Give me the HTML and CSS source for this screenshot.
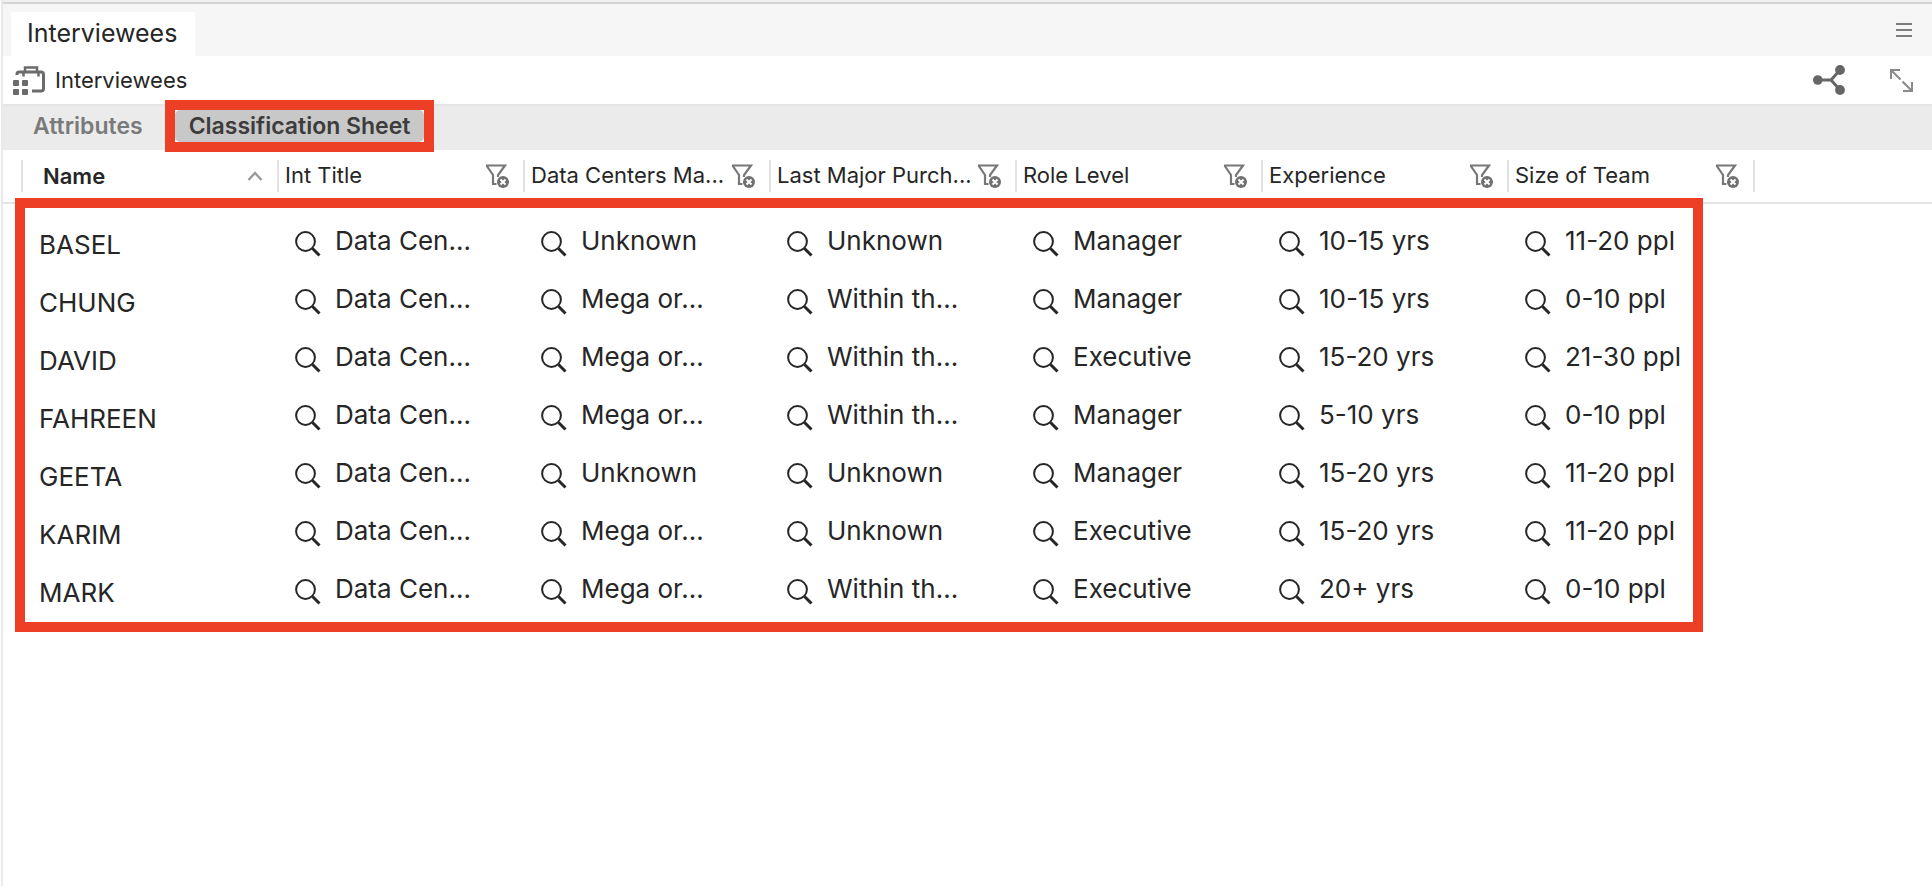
FILE: index.html
```
<!DOCTYPE html>
<html lang="en">
<head>
<meta charset="utf-8">
<title>Interviewees</title>
<link rel="stylesheet" href="styles.css">
</head>
<body>
<svg class="sprite" aria-hidden="true">
  <symbol id="filter" viewBox="0 0 24 24">
    <path d="M1 1.500H20L13 11V13M1.500 1.500L8 11V20H11.500" fill="none" stroke="#777" stroke-width="2.200"/>
    <circle cx="18" cy="18" r="6" fill="#707070"/>
    <path d="M15.500 15.500l5 5M20.500 15.500l-5 5" stroke="#fff" stroke-width="2"/>
  </symbol>
  <symbol id="search" viewBox="0 0 26 26">
    <circle cx="10.500" cy="10.500" r="9.400" fill="none" stroke="#262626" stroke-width="2"/>
    <path d="M17.500 17.500L24.500 24.500" stroke="#262626" stroke-width="3"/>
  </symbol>
</svg>
<div class="window">
  <header class="titlebar">
    <button class="doc-tab" type="button">Interviewees</button>
    <button class="icon-btn menu" type="button" aria-label="Menu">
      <svg width="16" height="14" viewBox="0 0 16 14"><path d="M0 1H16M0 7H16M0 13H16" stroke="#7c7c7c" stroke-width="2"/></svg>
    </button>
  </header>
  <div class="toolbar">
    <svg class="case" width="32" height="29" viewBox="0 0 32 29" aria-hidden="true">
      <g fill="none" stroke="#6b6b6b">
        <path d="M4 9V8Q4 6 6 6H28Q30.500 6 30.500 8.500V22.500Q30.500 25 28 25H19" stroke-width="3"/>
        <path d="M12 6V1.500H24V6" stroke-width="2.500"/>
        <path d="M10.500 6V10.500M25.500 6V10.500" stroke-width="2.500"/>
      </g>
      <g fill="#6b6b6b"><rect y="14" width="6" height="6" rx="1"/><rect x="9" y="14" width="6" height="6" rx="1"/><rect y="23" width="6" height="6" rx="1"/><rect x="9" y="23" width="6" height="6" rx="1"/></g>
    </svg>
    <h1 class="title">Interviewees</h1>
    <button class="icon-btn" type="button" aria-label="Share">
      <svg width="32" height="30" viewBox="0 0 32 30"><path d="M5 15H18L27 5M18 15L27 25" fill="none" stroke="#666" stroke-width="3"/><g fill="#666"><circle cx="4.800" cy="15" r="4.800"/><circle cx="27" cy="5" r="4.900"/><circle cx="27" cy="25" r="4.900"/></g></svg>
    </button>
    <button class="icon-btn" type="button" aria-label="Expand">
      <svg width="23" height="23" viewBox="0 0 23 23" fill="none" stroke="#8a8a8a" stroke-width="2"><path d="M1 10V1H10M1 1L10.500 10.500M22 13V22H13M22 22L12.500 12.500"/></svg>
    </button>
  </div>
  <nav class="views">
    <button class="view plain" type="button">Attributes</button>
    <span class="marked"><button class="view active" type="button">Classification Sheet</button></span>
  </nav>
  <main class="sheet">
    <table class="grid">
      <colgroup><col class="c-edge"><col class="c-name"><col class="c-attr"><col class="c-attr"><col class="c-attr"><col class="c-attr"><col class="c-attr"><col class="c-attr"><col></colgroup>
      <thead>
        <tr>
          <td></td>
          <th scope="col"><div class="head name-head"><span>Name</span><svg width="16" height="10" viewBox="0 0 16 10" aria-hidden="true"><path d="M1.500 9L8 2L14.500 9" fill="none" stroke="#999" stroke-width="2.400"/></svg></div></th>
          <th scope="col"><div class="head"><span>Int Title</span><button class="icon-btn" type="button" aria-label="Filter Int Title"><svg width="24" height="24"><use href="#filter"/></svg></button></div></th>
          <th scope="col"><div class="head"><span>Data Centers Ma...</span><button class="icon-btn" type="button" aria-label="Filter Data Centers"><svg width="24" height="24"><use href="#filter"/></svg></button></div></th>
          <th scope="col"><div class="head"><span>Last Major Purch...</span><button class="icon-btn" type="button" aria-label="Filter Last Major Purchase"><svg width="24" height="24"><use href="#filter"/></svg></button></div></th>
          <th scope="col"><div class="head"><span>Role Level</span><button class="icon-btn" type="button" aria-label="Filter Role Level"><svg width="24" height="24"><use href="#filter"/></svg></button></div></th>
          <th scope="col"><div class="head"><span>Experience</span><button class="icon-btn" type="button" aria-label="Filter Experience"><svg width="24" height="24"><use href="#filter"/></svg></button></div></th>
          <th scope="col"><div class="head"><span>Size of Team</span><button class="icon-btn" type="button" aria-label="Filter Size of Team"><svg width="24" height="24"><use href="#filter"/></svg></button></div></th>
          <td><div class="head"></div></td>
        </tr>
      </thead>
      <tbody id="rows"></tbody>
    </table>
    <div class="outline"></div>
  </main>
</div>
<script src="rows.js"></script>
</body>
</html>
```
FILE: rows.js
```
const people = [
  ["BASEL", "Data Cen...", "Unknown", "Unknown", "Manager", "10-15 yrs", "11-20 ppl"],
  ["CHUNG", "Data Cen...", "Mega or...", "Within th...", "Manager", "10-15 yrs", "0-10 ppl"],
  ["DAVID", "Data Cen...", "Mega or...", "Within th...", "Executive", "15-20 yrs", "21-30 ppl"],
  ["FAHREEN", "Data Cen...", "Mega or...", "Within th...", "Manager", "5-10 yrs", "0-10 ppl"],
  ["GEETA", "Data Cen...", "Unknown", "Unknown", "Manager", "15-20 yrs", "11-20 ppl"],
  ["KARIM", "Data Cen...", "Mega or...", "Unknown", "Executive", "15-20 yrs", "11-20 ppl"],
  ["MARK", "Data Cen...", "Mega or...", "Within th...", "Executive", "20+ yrs", "0-10 ppl"]
];
const cell = value => `<td><div class="value"><button class="icon-btn lookup" type="button" aria-label="Look up"><svg width="26" height="26"><use href="#search"/></svg></button><span>${value}</span></div></td>`;
document.getElementById("rows").innerHTML = people
  .map(([name, ...values]) => `<tr><td></td><th scope="row">${name}</th>${values.map(cell).join("")}<td></td></tr>`)
  .join("");
```
FILE: styles.css
```
* { box-sizing: border-box; }
body {
  margin: 0;
  background: #fff;
  color: #262626;
  font-family: Inter, "Liberation Sans", sans-serif;
  font-size: 26px;
}
button {
  border: 0;
  padding: 0;
  background: none;
  color: inherit;
  font: inherit;
}
svg { display: block; }
.sprite { position: absolute; width: 0; height: 0; }
.window {
  min-height: 100vh;
  margin-left: 1px;
  border-left: 2px solid #e9e9e9;
}
.titlebar {
  display: flex;
  align-items: flex-end;
  justify-content: space-between;
  height: 56px;
  padding: 0 20px 0 8px;
  background: linear-gradient(#f0f0f0 2px, #d4d4d4 2px, #d4d4d4 4px, #f6f6f6 4px);
}
.doc-tab {
  height: 44px;
  padding: 0 18px 2px 16px;
  background: #fff;
  font-size: 25px;
}
.menu { padding-bottom: 19px; }
.toolbar {
  display: flex;
  align-items: center;
  height: 50px;
  padding: 0 19px 0 10px;
  border-bottom: 2px solid #e6e6e6;
}
.title {
  flex: 1;
  margin: 0 0 0 10px;
  font-size: 22px;
  font-weight: 400;
}
.toolbar .icon-btn + .icon-btn { margin-left: 45px; }
.views {
  display: flex;
  align-items: center;
  height: 44px;
  padding-bottom: 4px;
  background: #ebebeb;
  font-size: 23px;
  font-weight: 600;
}
.view {
  height: 32px;
  color: #7a7a7a;
}
.plain { padding: 0 22px 0 30px; }
.marked {
  border: 10px solid #ec3f25;
  background: #fff;
}
.active {
  display: block;
  padding: 0 14px;
  border-radius: 5px;
  background: #c8c8c8;
  color: #3c3c3c;
}
.sheet { position: relative; }
.grid {
  width: 100%;
  table-layout: fixed;
  border-collapse: separate;
  border-spacing: 0;
}
.grid th, .grid td {
  padding: 0;
  font-weight: 400;
  text-align: left;
  white-space: nowrap;
}
.c-edge { width: 18px; }
.c-name { width: 256px; }
.c-attr { width: 246px; }
.grid thead th, .grid thead td {
  height: 54px;
  border-bottom: 2px solid #e4e4e4;
}
.head {
  display: flex;
  align-items: center;
  justify-content: space-between;
  height: 32px;
  padding: 0 14px 0 6px;
  border-left: 2px solid #e2e2e2;
  font-size: 22px;
}
.head span { padding-bottom: 2px; }
.name-head {
  padding: 0 14px 0 20px;
  font-weight: 600;
}
.name-head span { padding-bottom: 0; }
.grid tbody td, .grid tbody th {
  height: 58px;
  padding-top: 14px;
}
.grid tbody th { padding: 22px 0 0 18px; }
.value {
  display: flex;
  align-items: center;
  gap: 14px;
  padding-left: 18px;
}
.lookup { padding-top: 7px; }
.outline {
  position: absolute;
  top: 48px;
  bottom: -22px;
  left: 12px;
  width: 1688px;
  border: 10px solid #ec3f25;
  pointer-events: none;
}
```
